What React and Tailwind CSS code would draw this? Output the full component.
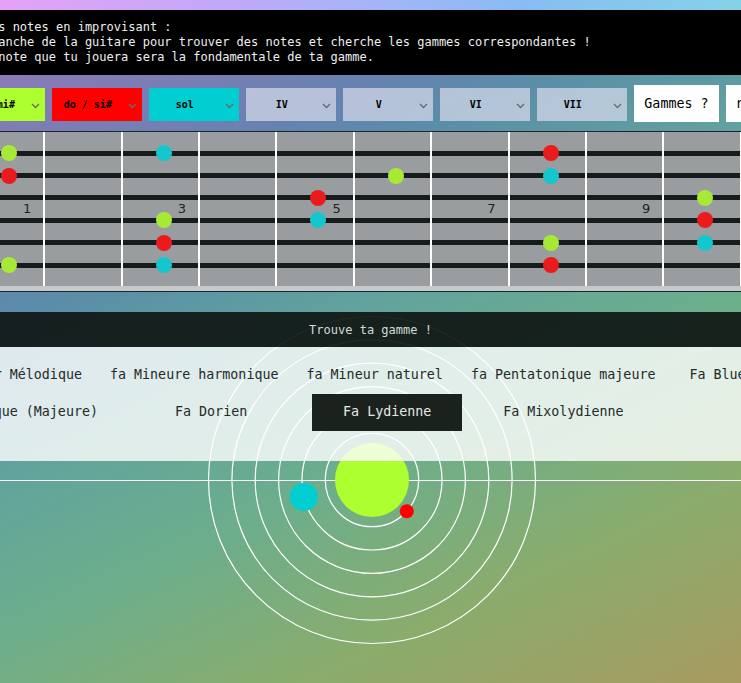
import React from 'react';

const mono = "font-['DejaVu_Sans_Mono',monospace]";

const selects = [
    { label: 'fa / mi#', bg: 'bg-[#adff2f]' },
    { label: 'do / si#', bg: 'bg-[#ff0000]' },
    { label: 'sol', bg: 'bg-[#00ced1]' },
    { label: 'IV', bg: 'bg-[rgba(210,215,232,0.75)]' },
    { label: 'V', bg: 'bg-[rgba(210,215,232,0.75)]' },
    { label: 'VI', bg: 'bg-[rgba(210,215,232,0.75)]' },
    { label: 'VII', bg: 'bg-[rgba(210,215,232,0.75)]' },
];

const dotColors = {
    g: 'bg-[#a6ea36]',
    r: 'bg-[#ea1a1d]',
    c: 'bg-[#14c7cc]',
};

// one entry per fret cell: string index -> colour, plus fret number
const frets = [
    { n: 1, dots: { 0: 'g', 1: 'r', 5: 'g' } },
    { dots: {} },
    { n: 3, dots: { 0: 'c', 3: 'g', 4: 'r', 5: 'c' } },
    { dots: {} },
    { n: 5, dots: { 2: 'r', 3: 'c' } },
    { dots: { 1: 'g' } },
    { n: 7, dots: {} },
    { dots: { 0: 'r', 1: 'c', 4: 'g', 5: 'r' } },
    { n: 9, dots: {} },
    { dots: { 2: 'g', 3: 'r', 4: 'c' } },
    { dots: {} },
    { n: 12, dots: {} },
];

const row1 = ['fa Mineur Mélodique', 'fa Mineure harmonique', 'fa Mineur naturel', 'fa Pentatonique majeure', 'Fa Blues', 'Fa Pentatonique mineure'];

const Chevron = () => (
    <svg width="9" height="6" viewBox="0 0 9 6" className="absolute right-[5px] top-[15px]">
        <path d="M1 1l3.5 3.5L8 1" fill="none" stroke="#6b6b6b" strokeWidth="1.4" />
    </svg>
);

const Fretboard = () => (
    <div className="border-y border-[#1b2530]">
        <div className="relative h-[154px] bg-[#9a9da0] overflow-hidden">
            <div className="flex flex-col pt-[10px]">
                {[0, 1, 2, 3, 4, 5].map((s) => (
                    <div key={s} className="h-[22.4px] flex items-center">
                        <div className="h-[5px] w-full bg-[#161c1c]" />
                    </div>
                ))}
            </div>
            <div className="absolute inset-0 flex pl-[97.4px]">
                {frets.map((f, i) => (
                    <div key={i} className="relative w-[77.375px] shrink-0 border-r-2 border-white flex flex-col pt-[10px]">
                        {[0, 1, 2, 3, 4, 5].map((s) => (
                            <div key={s} className="h-[22.4px] flex items-center pl-[33px]">
                                {f.dots[s] && <div className={`w-4 h-4 rounded-full ${dotColors[f.dots[s]]}`} />}
                            </div>
                        ))}
                        {f.n && (
                            <span className="absolute left-[55px] top-[77px] -translate-y-1/2 text-[13px] text-[#1d2222] font-['DejaVu_Sans',sans-serif]">
                                {f.n}
                            </span>
                        )}
                    </div>
                ))}
            </div>
        </div>
        <div className="h-[5px] bg-[#c6cacb]" />
    </div>
);

const Orbits = () => (
    <svg className="absolute left-0 top-0" width="1000" height="371" viewBox="0 0 1000 371">
        <line x1="0" y1="168.5" x2="1000" y2="168.5" stroke="#fff" strokeWidth="1.2" />
        {[46.7, 70, 93.4, 116.8, 140.1, 163.5].map((r) => (
            <circle key={r} cx="501" cy="168" r={r} fill="none" stroke="#fff" strokeWidth="1.2" />
        ))}
        <circle cx="501" cy="168" r="37" fill="#adff2f" />
        <circle cx="432.8" cy="185" r="14" fill="#00ced1" />
        <circle cx="535.8" cy="199.3" r="7" fill="#ff0000" />
    </svg>
);

export default function App() {
    return (
        <div className={`min-h-screen overflow-hidden bg-[linear-gradient(155deg,#9672bc_0%,#8a7ab8_8%,#6682b0_25%,#5a8ea8_32%,#62a49c_47%,#6cae8c_62%,#8aac6c_80%,#a89a60_100%)] ${mono}`}>
            <div className="h-[10px] bg-[linear-gradient(90deg,#e4a2f6,#c2a8f8_30%,#a6b4f8_50%,#88bcf2_70%,#84d2e8)]" />
            <div className="flex justify-center">
                <div className="w-[1000px] shrink-0">
                    <div className="bg-black py-[10px] pl-[41px] text-[12px] leading-[15px] text-[#eeeeee] whitespace-pre">
                        <p>Identifie les notes en improvisant :</p>
                        <p>Explore la manche de la guitare pour trouver des notes et cherche les gammes correspondantes !</p>
                        <p>La première note que tu jouera sera la fondamentale de ta gamme.</p>
                    </div>

                    <div className="flex justify-center items-start gap-[7px] mt-[10px] mb-[9px]">
                        {selects.map((s) => (
                            <div key={s.label} className={`relative mt-[3px] w-[90px] h-[33px] shrink-0 ${s.bg} flex items-center justify-center pr-[19px] text-[10px] font-bold text-black whitespace-pre`}>
                                {s.label}
                                <Chevron />
                            </div>
                        ))}
                        <button className="h-[37px] px-[10px] bg-white text-[13.333px] text-black shrink-0 whitespace-pre">Gammes ?</button>
                        <button className="h-[37px] px-[10px] bg-white text-[13.333px] text-black shrink-0">reset</button>
                    </div>

                    <Fretboard />

                    <div className="relative mt-[20px]">
                        <Orbits />
                        <div className="relative h-[35px] bg-[rgba(15,22,20,0.92)] flex items-center justify-center text-[12px] text-[#d4d9d9]">
                            Trouve ta gamme !
                        </div>
                        <div className="relative h-[114px] bg-[rgba(255,255,255,0.8)] pt-[9.5px] text-[13.333px] text-[#252a28]">
                            <div className="flex pl-[45px] whitespace-pre">
                                {row1.map((t, i) => (
                                    <button key={t} className={`h-[37px] px-[14px] shrink-0 ${i === 4 ? 'ml-[6px]' : ''}`}>{t}</button>
                                ))}
                            </div>
                            <div className="flex pl-[36px] whitespace-pre">
                                <button className="h-[37px] px-[31px] shrink-0">Fa Ionique (Majeure)</button>
                                <button className="h-[37px] px-[31px] shrink-0 ml-[15px]">Fa Dorien</button>
                                <button className="h-[37px] w-[150px] shrink-0 ml-[34px] bg-[#1b221e] text-[#e6e8e6]">Fa Lydienne</button>
                                <button className="h-[37px] px-[31px] shrink-0 ml-[10px]">Fa Mixolydienne</button>
                            </div>
                        </div>
                    </div>
                </div>
            </div>
        </div>
    );
}
